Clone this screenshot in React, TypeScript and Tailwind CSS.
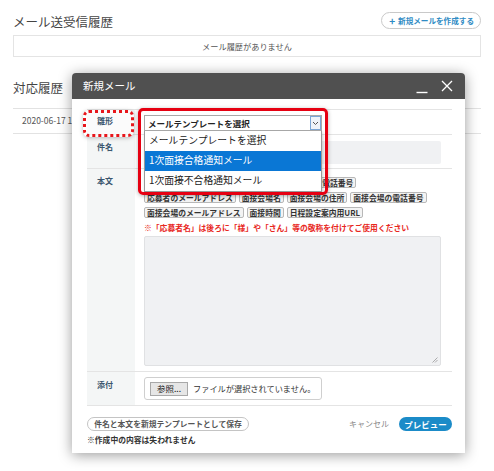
import React from "react";

const Tag = ({ children }: { children: React.ReactNode }) => (
  <span className="inline-flex h-[11px] items-center rounded-[2px] border border-[#b8b8b8] bg-[#f3f3f3] px-[2px] text-[7.8px] font-bold leading-none text-[#333]">
    {children}
  </span>
);

export default function App() {
  return (
    <div className="relative h-[471px] w-[494px] overflow-hidden bg-white font-['Noto_Sans_CJK_JP','Noto_Sans',sans-serif] text-[#333]">
      {/* background page */}
      <div className="px-[13px]">
        <div className="flex h-[29px] items-end justify-between">
          <h1 className="mb-[1px] text-[12.5px] leading-none text-[#444]">メール送受信履歴</h1>
          <button className="flex h-[17px] items-center gap-[3px] rounded-full border border-[#c9c9c9] bg-white pl-[7px] pr-[6px] text-[7.6px] font-bold leading-none text-[#2f8bc4]">
            <span className="text-[10px] font-bold leading-none">+</span>
            新規メールを作成する
          </button>
        </div>
        <div className="mt-[6px] flex h-[22px] items-center justify-center border border-[#e4e4e4] text-[8.2px] text-[#555]">
          メール履歴がありません
        </div>
        <h2 className="mt-[25px] text-[12.5px] leading-none text-[#444]">対応履歴</h2>
        <div className="mt-[13px] border-t border-[#e2e2e2]">
          <div className="flex h-[24px] items-center pl-[9px] text-[8.5px] text-[#555]">2020-06-17 14:00</div>
          <div className="border-t border-[#e2e2e2]" />
        </div>
      </div>

      {/* modal */}
      <div className="absolute left-[72px] top-[73px] h-[380px] w-[393px] rounded-t-[4px] bg-white shadow-[0_2px_14px_rgba(0,0,0,0.4)]">
        <div className="flex h-[26px] items-center justify-between rounded-t-[4px] bg-[#505050] pl-[11px] pr-[12px]">
          <span className="text-[10.5px] leading-none text-white">新規メール</span>
          <div className="flex items-center gap-[13px]">
            <svg width="12" height="12" viewBox="0 0 12 12" className="mt-[4px]">
              <path d="M0.5 10.5H11.5" stroke="white" strokeWidth="1.4" />
            </svg>
            <svg width="12" height="12" viewBox="0 0 12 12">
              <path d="M1 1L11 11M11 1L1 11" stroke="white" strokeWidth="1.3" />
            </svg>
          </div>
        </div>

        <div className="pl-[15px] pr-[13px] pt-[10px]">
          <div className="border-t border-[#e4e4e4]">
            {/* row 1 */}
            <div className="flex h-[25px] border-b border-[#e4e4e4]">
              <div className="w-[48px] bg-[#f4f6f6] pl-[10px] pt-[7px] text-[8px] leading-none">
                <span className="relative z-[6] block text-[8px] font-bold leading-none text-[#3b566e]">雛形</span>
              </div>
              <div className="flex-1 pl-[9px] pt-[5px]">
                <div className="relative z-[8] w-[178px]">
                  <div className="flex h-[16px] items-center border border-[#a9a9a9] bg-white">
                    <span className="flex-1 pl-[3px] text-[8.5px] font-bold leading-none text-[#222]">メールテンプレートを選択</span>
                    <span className="flex h-full w-[11px] items-center justify-center border border-[#7aa6d6] bg-[#eef3f9]">
                      <svg width="7" height="5" viewBox="0 0 7 5">
                        <path d="M1 1L3.5 3.5L6 1" stroke="#555" strokeWidth="1" fill="none" />
                      </svg>
                    </span>
                  </div>
                  <div className="absolute left-0 top-full w-[178px] border border-t-0 border-[#9a9a9a] bg-white shadow-[1px_2px_3px_rgba(0,0,0,0.2)]">
                    <div className="flex h-[20px] items-center pl-[4px] text-[9.8px] leading-none text-[#222]">メールテンプレートを選択</div>
                    <div className="flex h-[20px] items-center bg-[#0a77d5] pl-[4px] text-[9.8px] leading-none text-white">1次面接合格通知メール</div>
                    <div className="flex h-[20px] items-center pl-[4px] text-[9.8px] leading-none text-[#222]">1次面接不合格通知メール</div>
                  </div>
                </div>
              </div>
            </div>

            {/* row 2 */}
            <div className="flex h-[34px] border-b border-[#e4e4e4]">
              <div className="w-[48px] bg-[#f4f6f6] pl-[10px] pt-[8px] text-[8px] font-bold leading-none text-[#3b566e]">件名</div>
              <div className="flex-1 pl-[9px] pr-[11px] pt-[6px]">
                <div className="h-[23px] rounded-[2px] bg-[#f0f1f3]" />
              </div>
            </div>

            {/* row 3 */}
            <div className="flex h-[203px] border-b border-[#e4e4e4]">
              <div className="w-[48px] bg-[#f4f6f6] pl-[10px] pt-[8px] text-[8px] font-bold leading-none text-[#3b566e]">本文</div>
              <div className="flex flex-1 flex-col pl-[9px] pr-[11px] pt-[8px]">
                <div className="flex flex-col gap-[4px]">
                  <div className="flex gap-[3px]">
                    <Tag>求人名</Tag>
                    <Tag>応募者名</Tag>
                    <Tag>応募者のふりがな</Tag>
                    <Tag>応募者の電話番号</Tag>
                  </div>
                  <div className="flex gap-[3px]">
                    <Tag>応募者のメールアドレス</Tag>
                    <Tag>面接会場名</Tag>
                    <Tag>面接会場の住所</Tag>
                    <Tag>面接会場の電話番号</Tag>
                  </div>
                  <div className="flex gap-[3px]">
                    <Tag>面接会場のメールアドレス</Tag>
                    <Tag>面接時間</Tag>
                    <Tag>日程設定案内用URL</Tag>
                  </div>
                </div>
                <div className="mt-[5px] whitespace-nowrap text-[7.8px] font-bold leading-[10px] text-[#e8281e]">
                  ※「応募者名」は後ろに「様」や「さん」等の敬称を付けてご使用ください
                </div>
                <div className="relative mt-[3px] h-[130px] rounded-[2px] border border-[#e0e1e3] bg-[#f0f1f3]">
                  <svg width="6" height="6" viewBox="0 0 6 6" className="absolute bottom-[2px] right-[2px]">
                    <path d="M5.5 0.5L0.5 5.5M5.5 3L3 5.5" stroke="#999" strokeWidth="0.8" />
                  </svg>
                </div>
              </div>
            </div>

            {/* row 4 */}
            <div className="flex h-[34px] border-b border-[#e4e4e4]">
              <div className="w-[48px] bg-[#f4f6f6] pl-[10px] pt-[9px] text-[8px] font-bold leading-none text-[#3b566e]">添付</div>
              <div className="flex-1 pl-[9px] pt-[5px]">
                <div className="flex h-[23px] w-[178px] items-center rounded-[3px] border border-[#cfcfcf] bg-white pl-[5px]">
                  <span className="flex h-[14px] w-[38px] shrink-0 items-center justify-center border border-[#a8a8a8] bg-[#e6e6e6] text-[8.5px] leading-none text-[#222]">参照...</span>
                  <span className="ml-[5px] whitespace-nowrap text-[8.2px] leading-none text-[#333]">ファイルが選択されていません。</span>
                </div>
              </div>
            </div>
          </div>

          {/* footer */}
          <div className="mt-[11px] flex items-start justify-between">
            <div className="flex flex-col">
              <button className="flex h-[14px] w-[162px] items-center justify-center rounded-full border border-[#c4c4c4] bg-white text-[7.8px] font-bold leading-none text-[#555]">
                件名と本文を新規テンプレートとして保存
              </button>
              <span className="mt-[4px] text-[7.8px] font-bold leading-[10px] text-[#333]">※作成中の内容は失われません</span>
            </div>
            <div className="flex items-center gap-[10px]">
              <span className="text-[8px] leading-none text-[#888]">キャンセル</span>
              <button className="flex h-[14px] w-[53px] items-center justify-center rounded-full bg-[#1b8bc8] text-[8.5px] font-bold leading-none text-white">
                プレビュー
              </button>
            </div>
          </div>
        </div>

        {/* annotations */}
        <div className="pointer-events-none absolute left-[11px] top-[37px] z-[5] h-[27px] w-[51px] rounded-[6px] border-[3px] border-dotted border-[#e8161b] bg-white/60 shadow-[0_1px_4px_rgba(0,0,0,0.25)]" />
        <div className="pointer-events-none absolute left-[66px] top-[35px] z-[9] h-[87px] w-[190px] rounded-[5px] border-[3px] border-[#e60012] shadow-[0_1px_4px_rgba(0,0,0,0.3)]" />
      </div>
    </div>
  );
}
